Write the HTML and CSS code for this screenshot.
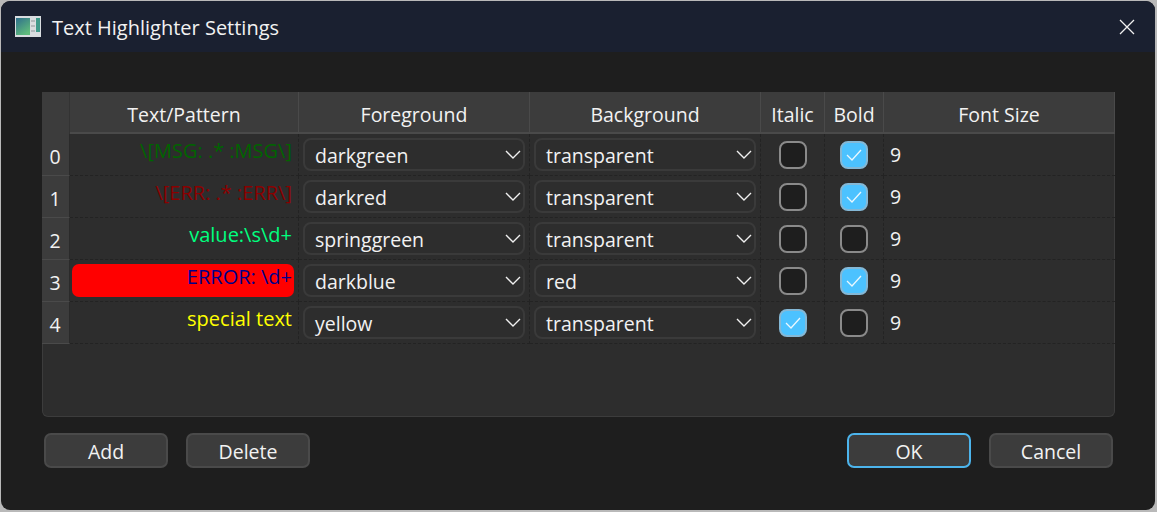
FILE: index.html
```html
<!DOCTYPE html>
<html lang="en">
<head>
<meta charset="UTF-8">
<title>Text Highlighter Settings</title>
<link rel="stylesheet" href="styles.css">
</head>
<body>

<div class="window">
    <div class="titlebar">
        <svg class="app-icon" width="26" height="21" viewBox="0 0 26 21">
            <defs>
                <linearGradient id="pane" x1="0" y1="0" x2="0.6" y2="1">
                    <stop offset="0" stop-color="#2f6f8c"/>
                    <stop offset="1" stop-color="#5fbb7c"/>
                </linearGradient>
            </defs>
            <rect width="26" height="21" fill="#d9dde0"/>
            <rect x="1" y="2" width="14" height="17" fill="url(#pane)"/>
            <rect x="21" y="2" width="4" height="14" fill="#3f9a8a"/>
            <rect x="16" y="4" width="4" height="2" fill="#b4babd"/>
            <rect x="16" y="9" width="4" height="2" fill="#b4babd"/>
            <rect x="16" y="14" width="4" height="2" fill="#b4babd"/>
        </svg>
        <span class="title">Text Highlighter Settings</span>
        <svg class="close" width="16" height="16" viewBox="0 0 16 16">
            <path d="M1 1 L15 15 M15 1 L1 15" stroke="#f0f0f0" stroke-width="1.3" fill="none"/>
        </svg>
    </div>

    <div class="content">
        <div class="table">
            <div class="grid">
                <div class="corner"></div>
                <div class="head">Text/Pattern</div>
                <div class="head">Foreground</div>
                <div class="head">Background</div>
                <div class="head">Italic</div>
                <div class="head">Bold</div>
                <div class="head">Font Size</div>

                <div class="rownum">0</div>
                <div class="cell pattern"><span class="c-darkgreen">\[MSG: .* :MSG\]</span></div>
                <div class="cell"><div class="combo">darkgreen<svg class="chev" width="16" height="9" viewBox="0 0 16 9"><path d="M1 1 L8 8 L15 1"/></svg></div></div>
                <div class="cell"><div class="combo">transparent<svg class="chev" width="16" height="9" viewBox="0 0 16 9"><path d="M1 1 L8 8 L15 1"/></svg></div></div>
                <div class="cell center"><div class="check"></div></div>
                <div class="cell center"><div class="check on"><svg width="16" height="12" viewBox="0 0 16 12"><path d="M1 6 L6 11 L15 1"/></svg></div></div>
                <div class="cell size">9</div>

                <div class="rownum">1</div>
                <div class="cell pattern"><span class="c-darkred">\[ERR: .* :ERR\]</span></div>
                <div class="cell"><div class="combo">darkred<svg class="chev" width="16" height="9" viewBox="0 0 16 9"><path d="M1 1 L8 8 L15 1"/></svg></div></div>
                <div class="cell"><div class="combo">transparent<svg class="chev" width="16" height="9" viewBox="0 0 16 9"><path d="M1 1 L8 8 L15 1"/></svg></div></div>
                <div class="cell center"><div class="check"></div></div>
                <div class="cell center"><div class="check on"><svg width="16" height="12" viewBox="0 0 16 12"><path d="M1 6 L6 11 L15 1"/></svg></div></div>
                <div class="cell size">9</div>

                <div class="rownum">2</div>
                <div class="cell pattern"><span class="c-spring">value:\s\d+</span></div>
                <div class="cell"><div class="combo">springgreen<svg class="chev" width="16" height="9" viewBox="0 0 16 9"><path d="M1 1 L8 8 L15 1"/></svg></div></div>
                <div class="cell"><div class="combo">transparent<svg class="chev" width="16" height="9" viewBox="0 0 16 9"><path d="M1 1 L8 8 L15 1"/></svg></div></div>
                <div class="cell center"><div class="check"></div></div>
                <div class="cell center"><div class="check"></div></div>
                <div class="cell size">9</div>

                <div class="rownum">3</div>
                <div class="cell pattern"><span class="c-darkblue red-box">ERROR: \d+</span></div>
                <div class="cell"><div class="combo">darkblue<svg class="chev" width="16" height="9" viewBox="0 0 16 9"><path d="M1 1 L8 8 L15 1"/></svg></div></div>
                <div class="cell"><div class="combo">red<svg class="chev" width="16" height="9" viewBox="0 0 16 9"><path d="M1 1 L8 8 L15 1"/></svg></div></div>
                <div class="cell center"><div class="check"></div></div>
                <div class="cell center"><div class="check on"><svg width="16" height="12" viewBox="0 0 16 12"><path d="M1 6 L6 11 L15 1"/></svg></div></div>
                <div class="cell size">9</div>

                <div class="rownum">4</div>
                <div class="cell pattern"><span class="c-yellow">special text</span></div>
                <div class="cell"><div class="combo">yellow<svg class="chev" width="16" height="9" viewBox="0 0 16 9"><path d="M1 1 L8 8 L15 1"/></svg></div></div>
                <div class="cell"><div class="combo">transparent<svg class="chev" width="16" height="9" viewBox="0 0 16 9"><path d="M1 1 L8 8 L15 1"/></svg></div></div>
                <div class="cell center"><div class="check on"><svg width="16" height="12" viewBox="0 0 16 12"><path d="M1 6 L6 11 L15 1"/></svg></div></div>
                <div class="cell center"><div class="check"></div></div>
                <div class="cell size">9</div>
            </div>
        </div>

        <div class="buttons">
            <button type="button">Add</button>
            <button type="button">Delete</button>
            <div class="spacer"></div>
            <button type="button" class="default">OK</button>
            <button type="button">Cancel</button>
        </div>
    </div>
</div>

</body>
</html>
```

FILE: styles.css
```css
* {
    box-sizing: border-box;
}

html,
body {
    margin: 0;
    height: 100%;
}

body {
    padding: 1px 2px 2px 1px;
    background-color: #b9b9b9;
    font-family: "Open Sans", sans-serif;
    font-size: 19.5px;
    color: #f2f2f2;
    overflow: hidden;
}

.window {
    height: 509px;
    background-color: #1e1e1e;
    border-radius: 9px;
    overflow: hidden;
}

.titlebar {
    height: 51px;
    display: flex;
    align-items: center;
    padding: 0 20px 0 14px;
    background-color: #1a2030;
}

.app-icon {
    margin-right: 11px;
}

.title {
    flex: 1;
    padding-top: 2px;
    font-size: 20px;
}

.content {
    padding: 40px 40px 0 41px;
}

.table {
    height: 325px;
    background-color: #2d2d2d;
    border: 1px solid #3c3c3c;
    border-top: none;
    border-radius: 0 0 6px 6px;
}

.grid {
    display: grid;
    grid-template-columns: 28px 229px 231px 231px 64px 59px 1fr;
    grid-template-rows: 42px repeat(5, 42px);
    margin-left: -1px;
    margin-right: -1px;
}

.corner,
.head {
    background-color: #3c3c3c;
    border-bottom: 2px solid #4a4a4a;
}

.head {
    display: flex;
    align-items: center;
    justify-content: center;
    border-right: 1px solid #4a4a4a;
    padding-top: 4px;
}

.head:last-of-type {
    border-right: none;
}

.corner {
    border-right: 1px solid #333;
    border-bottom: none;
}

.rownum {
    display: flex;
    align-items: center;
    justify-content: center;
    padding: 4px 1px 0 0;
    background-color: #3c3c3c;
    border-bottom: 1px solid #4a4a4a;
    border-right: 1px solid #2a2a2a;
}

.cell {
    display: flex;
    align-items: center;
    padding: 0 4px;
    border-right: 1px dashed #232323;
    border-bottom: 1px dashed #232323;
}

.center {
    justify-content: center;
}

.pattern {
    padding: 0 4px 0 2px;
}

.pattern span {
    display: block;
    width: 100%;
    height: 33px;
    padding-right: 2px;
    font-size: 20px;
    text-align: right;
    line-height: 25px;
    border-radius: 7px;
}

.red-box {
    background-color: #ff0000;
}

.c-darkgreen {
    color: #006400;
}

.c-darkred {
    color: #8b0000;
}

.c-spring {
    color: #00ff7f;
}

.c-darkblue {
    color: #00008b;
}

.c-yellow {
    color: #ffff00;
}

.combo {
    width: 100%;
    height: 33px;
    display: flex;
    align-items: center;
    justify-content: space-between;
    padding: 2px 2px 0 10px;
    background-color: #2d2d2d;
    border: 2px solid #3a3a3a;
    border-radius: 8px;
}

.chev {
    margin-top: -2px;
}

.chev path {
    fill: none;
    stroke: #f0f0f0;
    stroke-width: 1.4;
}

.check {
    width: 28px;
    height: 28px;
    display: flex;
    align-items: center;
    justify-content: center;
    background-color: #1e1e1e;
    border: 2px solid #8a8a8a;
    border-radius: 8px;
}

.check.on {
    background-color: #4cc2ff;
    border-color: #84b8d6;
}

.check path {
    fill: none;
    stroke: #eaf8ff;
    stroke-width: 1.3;
}

.size {
    padding-left: 6px;
    border-right: none;
}

.buttons {
    display: flex;
    gap: 18px;
    margin-top: 16px;
    padding: 0 2px 0 2px;
}

.spacer {
    flex: 1;
}

button {
    width: 124px;
    height: 35px;
    padding: 2px 0 0;
    background-color: #3c3c3c;
    color: #f2f2f2;
    border: 2px solid #4a4a4a;
    border-radius: 7px;
    font-family: inherit;
    font-size: 19.5px;
}

button.default {
    border-color: #4cb4ec;
}
```
